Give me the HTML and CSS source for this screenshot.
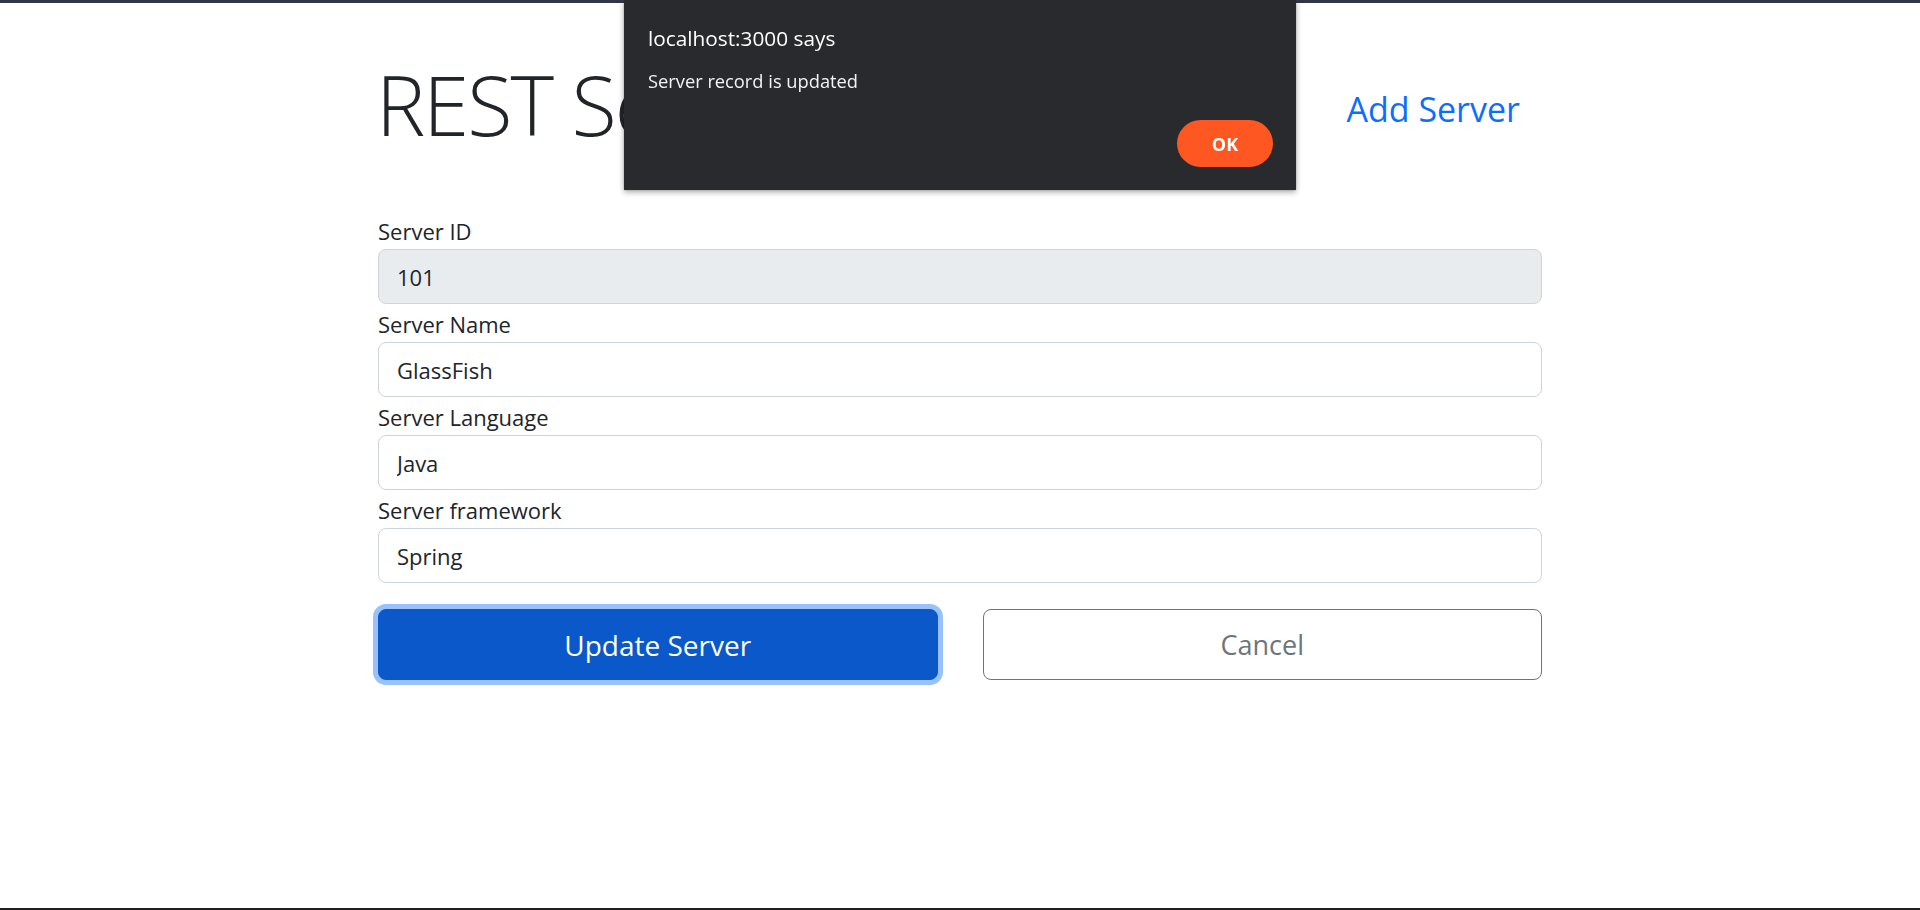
FILE: index.html
```html
<!DOCTYPE html>
<html lang="en">
<head>
<meta charset="utf-8">
<title>REST Servers</title>
<link rel="stylesheet" href="styles.css">
</head>
<body>
  <div class="frame-top"></div>
  <main class="page">
    <header class="page-head">
      <h1 class="page-title">REST Servers</h1>
      <a class="add-link" href="#">Add Server</a>
    </header>
    <form class="server-form">
      <div class="field">
        <label class="field-label" for="sid">Server ID</label>
        <input class="control" id="sid" value="101" disabled>
      </div>
      <div class="field">
        <label class="field-label" for="sname">Server Name</label>
        <input class="control" id="sname" value="GlassFish">
      </div>
      <div class="field">
        <label class="field-label" for="slang">Server Language</label>
        <input class="control" id="slang" value="Java">
      </div>
      <div class="field">
        <label class="field-label" for="sfw">Server framework</label>
        <input class="control" id="sfw" value="Spring">
      </div>
      <div class="actions">
        <button type="button" class="btn btn-primary">Update Server</button>
        <button type="button" class="btn btn-outline">Cancel</button>
      </div>
    </form>
  </main>
  <div class="frame-bottom"></div>

  <div class="alert-dialog" role="alertdialog">
    <div class="alert-title">localhost:3000 says</div>
    <div class="alert-message">Server record is updated</div>
    <div class="alert-actions">
      <button type="button" class="alert-ok">OK</button>
    </div>
  </div>
</body>
</html>
```

FILE: styles.css
```css
* { box-sizing: border-box; }

html, body {
  margin: 0;
  padding: 0;
}

body {
  height: 910px;
  display: flex;
  flex-direction: column;
  background: #ffffff;
  color: #212529;
  font-family: "Open Sans", "Noto Sans", sans-serif;
  overflow: hidden;
}

.frame-top {
  height: 3px;
  background: #303644;
  flex: none;
}

.frame-bottom {
  height: 2px;
  background: #1f1f1f;
  flex: none;
}

.page {
  flex: 1;
  width: 1164px;
  margin: 0 auto;
  padding-top: 51px;
}

.page-head {
  display: flex;
  justify-content: space-between;
  align-items: flex-start;
}

.page-title {
  margin: 0 0 0 -2px;
  font-size: 83px;
  font-weight: 300;
  line-height: 100px;
  letter-spacing: -2px;
  color: #212529;
}

.add-link {
  margin-top: 29px;
  margin-right: 22px;
  font-size: 34px;
  line-height: 52px;
  color: #0d6efd;
  text-decoration: none;
}

.server-form {
  margin-top: 59px;
}

.field {
  display: flex;
  flex-direction: column;
  margin-bottom: 2px;
}

.field-label {
  font-size: 22px;
  line-height: 36px;
  color: #212529;
}

.control {
  height: 55px;
  padding: 1px 18px 0;
  border: 1px solid #ced4da;
  border-radius: 8px;
  background: #ffffff;
  font-family: "Open Sans", "Noto Sans", sans-serif;
  font-size: 22px;
  color: #212529;
  outline: none;
}

.control:disabled {
  background: #e9ecef;
  color: #212529;
  opacity: 1;
}

.actions {
  display: grid;
  grid-template-columns: 1fr 1fr;
  column-gap: 45px;
  margin-top: 26px;
}

.btn {
  height: 71px;
  border-radius: 8px;
  font-family: "Open Sans", "Noto Sans", sans-serif;
  font-size: 28px;
  cursor: pointer;
}

.btn-primary {
  background: #0a58ca;
  border: 1px solid #0a58ca;
  color: #ffffff;
  box-shadow: 0 0 0 5px #98c1fd;
}

.btn-outline {
  background: #ffffff;
  border: 1px solid #6c757d;
  color: #6c757d;
  font-size: 27px;
}

.alert-dialog {
  position: fixed;
  top: 0;
  left: 624px;
  width: 672px;
  height: 190px;
  padding: 24px 23px 23px 24px;
  background: #292a2d;
  box-shadow: 0 2px 6px rgba(0, 0, 0, 0.35), 0 0 2px rgba(0, 0, 0, 0.2);
  color: #ffffff;
  font-family: "Open Sans", "Noto Sans", sans-serif;
}

.alert-title {
  font-size: 20.8px;
  line-height: 28px;
  color: #ffffff;
}

.alert-message {
  margin-top: 16px;
  font-size: 18.3px;
  line-height: 26px;
  color: #f1f3f4;
}

.alert-actions {
  display: flex;
  justify-content: flex-end;
  margin-top: 26px;
}

.alert-ok {
  width: 96px;
  height: 47px;
  border: none;
  border-radius: 24px;
  background: #ff5722;
  color: #ffffff;
  font-family: "Open Sans", "Noto Sans", sans-serif;
  font-size: 18px;
  font-weight: 700;
}
```
